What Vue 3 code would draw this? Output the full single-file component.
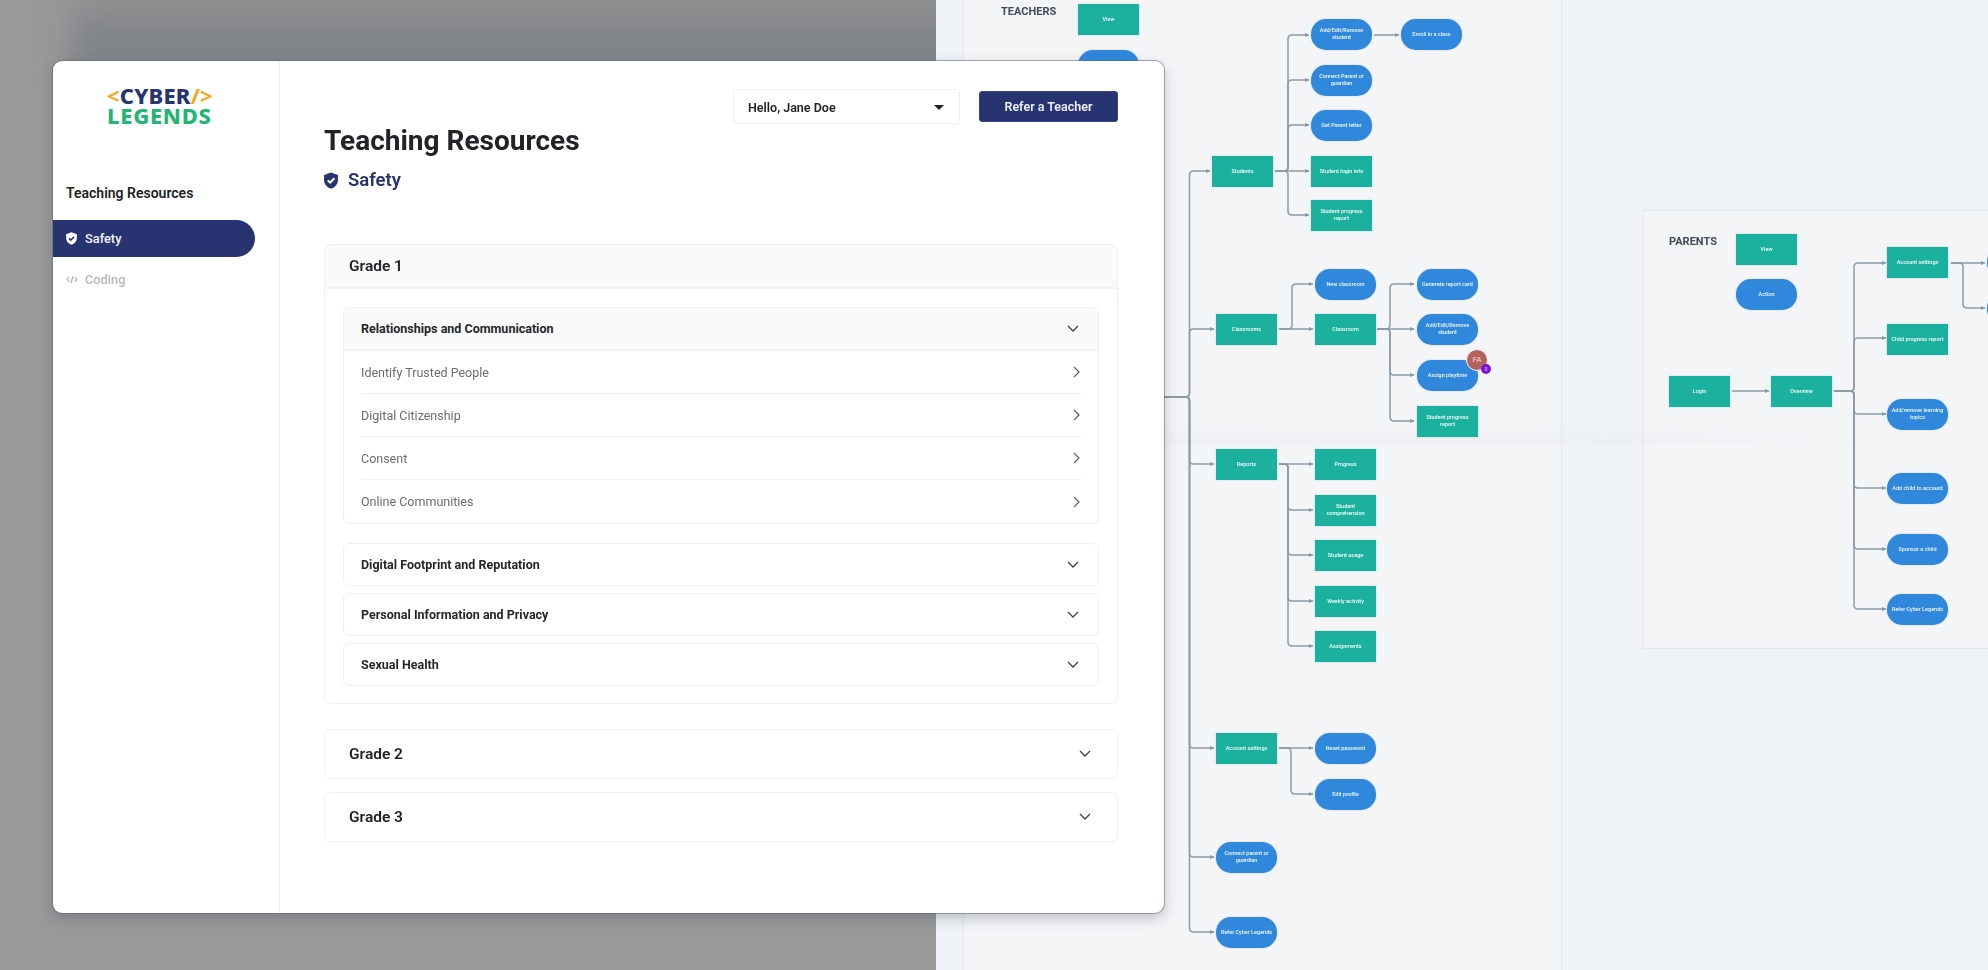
<template>
  <div class="page">
    <!-- flowchart behind the app window -->
    <div class="board">
      <div class="frame frame-teachers"></div>
      <div class="frame frame-parents"></div>
      <div class="fold"></div>
      <span class="board-label label-teachers">TEACHERS</span>
      <span class="board-label label-parents">PARENTS</span>

      <svg class="links" width="1988" height="970" viewBox="0 0 1988 970">
        <defs>
          <marker id="arrow" markerUnits="userSpaceOnUse" markerWidth="5" markerHeight="5" refX="4" refY="2.5" orient="auto">
            <path d="M0 .6 4.2 2.5 0 4.4z" fill="#8796a5" />
          </marker>
        </defs>
        <path v-for="(d, i) in links" :key="i" :d="d" class="link" marker-end="url(#arrow)" />
      </svg>

      <div
        v-for="n in nodes"
        :key="n.x + '-' + n.y"
        class="node"
        :class="n.pill ? 'node-pill' : 'node-rect'"
        :style="{ left: n.x + 'px', top: n.y + 'px' }"
      >{{ n.t }}</div>

      <div class="avatar">FA<span class="avatar-badge">0</span></div>
    </div>

    <div class="backdrop"><div class="backdrop-dark"></div></div>

    <div class="window">
      <aside class="sidebar">
        <div class="logo">
          <div class="logo-top"><span class="orange">&lt;</span>CYBER<span class="orange">/&gt;</span></div>
          <div class="logo-bottom">LEGENDS</div>
        </div>
        <div class="side-title">Teaching Resources</div>
        <div class="side-item active">
          <svg class="side-icon" viewBox="3 1 18 22">
            <path d="M12 1.5 3 4.8v6.4c0 5.5 3.8 9.7 9 11.3 5.2-1.6 9-5.8 9-11.3V4.8L12 1.5z" fill="#fff" />
            <path d="M7.8 11.8l3 3 5.6-5.8" fill="none" stroke="#283371" stroke-width="2.6" />
          </svg>
          Safety
        </div>
        <div class="side-item muted">
          <svg class="side-icon code" viewBox="0 0 24 16">
            <path d="M7 3 2 8l5 5M17 3l5 5-5 5M14 1l-4 14" fill="none" stroke="#a9a9a9" stroke-width="2.1" />
          </svg>
          Coding
        </div>
      </aside>

      <main class="main">
        <div class="topbar">
          <div class="user-select">
            <span>Hello, Jane Doe</span>
            <i class="caret"></i>
          </div>
          <button class="refer-btn">Refer a Teacher</button>
        </div>

        <h1>Teaching Resources</h1>
        <div class="subject">
          <svg class="subject-icon" viewBox="3 1 18 22">
            <path d="M12 1.5 3 4.8v6.4c0 5.5 3.8 9.7 9 11.3 5.2-1.6 9-5.8 9-11.3V4.8L12 1.5z" fill="#283371" />
            <path d="M7.8 11.8l3 3 5.6-5.8" fill="none" stroke="#fff" stroke-width="2.6" />
          </svg>
          Safety
        </div>

        <section class="grade grade-open">
          <div class="grade-head">Grade 1</div>
          <div class="grade-body">
            <div class="topic topic-open">
              <div class="topic-head">
                <span>Relationships and Communication</span>
                <svg class="chev-down" viewBox="0 0 12 7"><path d="M1 1l5 5 5-5" /></svg>
              </div>
              <div v-for="r in lessons" :key="r" class="lesson">
                <span>{{ r }}</span>
                <svg class="chev-right" viewBox="0 0 7 12"><path d="M1 .8l5 5.2-5 5.2" /></svg>
              </div>
            </div>
            <div v-for="t in topics" :key="t" class="topic topic-closed">
              <span>{{ t }}</span>
              <svg class="chev-down" viewBox="0 0 12 7"><path d="M1 1l5 5 5-5" /></svg>
            </div>
          </div>
        </section>

        <section v-for="g in grades" :key="g" class="grade grade-closed">
          <span>{{ g }}</span>
          <svg class="chev-down" viewBox="0 0 12 7"><path d="M1 1l5 5 5-5" /></svg>
        </section>
      </main>
    </div>
  </div>
</template>

<script setup>
const lessons = ['Identify Trusted People', 'Digital Citizenship', 'Consent', 'Online Communities']
const topics = ['Digital Footprint and Reputation', 'Personal Information and Privacy', 'Sexual Health']
const grades = ['Grade 2', 'Grade 3']

const nodes = [
  { x: 1078, y: 4, t: 'View' },
  { x: 1078, y: 50, t: 'Action', pill: true },
  { x: 1311, y: 19, t: 'Add/Edit/Remove student', pill: true },
  { x: 1401, y: 19, t: 'Enroll in a class', pill: true },
  { x: 1311, y: 65, t: 'Connect Parent or guardian', pill: true },
  { x: 1311, y: 110, t: 'Get Parent letter', pill: true },
  { x: 1311, y: 156, t: 'Student login info' },
  { x: 1311, y: 200, t: 'Student progress report' },
  { x: 1212, y: 156, t: 'Students' },
  { x: 1216, y: 314, t: 'Classrooms' },
  { x: 1315, y: 269, t: 'New classroom', pill: true },
  { x: 1315, y: 314, t: 'Classroom' },
  { x: 1417, y: 269, t: 'Generate report card', pill: true },
  { x: 1417, y: 314, t: 'Add/Edit/Remove student', pill: true },
  { x: 1417, y: 360, t: 'Assign playtime', pill: true },
  { x: 1417, y: 406, t: 'Student progress report' },
  { x: 1216, y: 449, t: 'Reports' },
  { x: 1315, y: 449, t: 'Progress' },
  { x: 1315, y: 495, t: 'Student comprehension' },
  { x: 1315, y: 540, t: 'Student usage' },
  { x: 1315, y: 586, t: 'Weekly activity' },
  { x: 1315, y: 631, t: 'Assignments' },
  { x: 1216, y: 733, t: 'Account settings' },
  { x: 1315, y: 733, t: 'Reset password', pill: true },
  { x: 1315, y: 779, t: 'Edit profile', pill: true },
  { x: 1216, y: 842, t: 'Connect parent or guardian', pill: true },
  { x: 1216, y: 917, t: 'Refer Cyber Legends', pill: true },
  { x: 1736, y: 234, t: 'View' },
  { x: 1736, y: 279, t: 'Action', pill: true },
  { x: 1669, y: 376, t: 'Login' },
  { x: 1771, y: 376, t: 'Overview' },
  { x: 1887, y: 247, t: 'Account settings' },
  { x: 1887, y: 324, t: 'Child progress report' },
  { x: 1887, y: 399, t: 'Add/remove learning topics', pill: true },
  { x: 1887, y: 473, t: 'Add child to account', pill: true },
  { x: 1887, y: 534, t: 'Sponsor a child', pill: true },
  { x: 1887, y: 594, t: 'Refer Cyber Legends', pill: true },
  { x: 1987, y: 247, t: '', pill: true },
  { x: 1987, y: 293, t: '', pill: true },
]

// one connector: out of a node, along the junction line, into the next node
function elbow(x0, y0, jx, x1, y1) {
  if (y0 === y1) return `M${x0} ${y0}H${x1}`
  const r = 4
  const s = y1 > y0 ? 1 : -1
  return `M${x0} ${y0}H${jx - r}Q${jx} ${y0} ${jx} ${y0 + s * r}V${y1 - s * r}Q${jx} ${y1} ${jx + r} ${y1}H${x1}`
}

function fan(x0, y0, jx, x1, ys) {
  return ys.map((y) => elbow(x0, y0, jx, x1, y))
}

const links = [
  ...fan(1150, 397, 1189.5, 1210, [171]),
  ...fan(1150, 397, 1189.5, 1214, [329, 464, 748, 857, 932]),
  ...fan(1275, 171, 1288, 1309, [35, 80, 125, 171, 215]),
  elbow(1374, 35, 0, 1399, 35),
  ...fan(1279, 329, 1292, 1313, [284, 329]),
  ...fan(1377, 329, 1390, 1414, [284, 329, 375, 421]),
  ...fan(1279, 464, 1288, 1313, [464, 510, 555, 601, 646]),
  ...fan(1279, 748, 1291, 1313, [748, 794]),
  elbow(1732, 391, 0, 1769, 391),
  ...fan(1834, 391, 1854, 1886, [263, 338, 414, 488, 549, 609]),
  ...fan(1951, 263, 1963, 1985, [263, 308]),
]
</script>

<style scoped>
* {
  box-sizing: border-box;
}
.page {
  position: relative;
  width: 1988px;
  height: 970px;
  overflow: hidden;
  background: #eff3f7;
  font-family: Roboto, "Liberation Sans", sans-serif;
  color: #212326;
}

/* flowchart */
.board {
  position: absolute;
  inset: 0;
  filter: blur(0.5px);
}
.frame {
  position: absolute;
  background: #f3f5f7;
  border: 1px solid #e2e8ee;
}
.frame-teachers {
  left: 963px;
  top: -2px;
  width: 599px;
  height: 974px;
}
.frame-parents {
  left: 1643px;
  top: 210px;
  width: 360px;
  height: 439px;
}
.board-label {
  position: absolute;
  font-weight: 700;
  font-size: 11px;
  line-height: 14px;
  color: #414b57;
}
.label-teachers {
  left: 1001px;
  top: 5px;
}
.label-parents {
  left: 1669px;
  top: 235px;
}
.links {
  position: absolute;
  left: 0;
  top: 0;
}
.link {
  fill: none;
  stroke: #8c9aa8;
  stroke-width: 1.5;
}
.node {
  position: absolute;
  width: 61px;
  height: 30.5px;
  display: flex;
  align-items: center;
  justify-content: center;
  text-align: center;
  padding: 0 4px;
  font-size: 5.5px;
  line-height: 7.5px;
  font-weight: 500;
  color: #f4fcfb;
  box-shadow: 0 0 2px rgba(120, 150, 170, 0.35);
}
.node-rect {
  background: #1cb09f;
}
.node-pill {
  background: #2f88dc;
  border-radius: 15px;
  color: #f2f8fe;
}
.avatar {
  position: absolute;
  left: 1466px;
  top: 349px;
  width: 22px;
  height: 22px;
  border-radius: 50%;
  background: #b5625f;
  border: 1px solid #f3f5f8;
  color: #f3dcdb;
  font-size: 8px;
  line-height: 20px;
  text-align: center;
}
.avatar-badge {
  position: absolute;
  left: 14px;
  top: 14px;
  width: 10px;
  height: 10px;
  border-radius: 50%;
  background: #7a10e0;
  color: #e9d8fb;
  font-size: 5px;
  line-height: 10px;
}
.fold {
  position: absolute;
  left: 936px;
  top: 425px;
  width: 920px;
  height: 20px;
  background: linear-gradient(180deg, rgba(232, 235, 238, 0), rgba(232, 235, 238, 0.4));
  -webkit-mask-image: linear-gradient(90deg, #000 70%, transparent);
  mask-image: linear-gradient(90deg, #000 70%, transparent);
}

/* blurred grey page on the left */
.backdrop {
  position: absolute;
  left: 0;
  top: 0;
  width: 936px;
  height: 970px;
  overflow: hidden;
  background: #99999a;
}
.backdrop-dark {
  position: absolute;
  left: 70px;
  top: -30px;
  width: 920px;
  height: 105px;
  background: linear-gradient(180deg, #929394 20%, #7e8286 75%);
  filter: blur(14px);
}

/* app window */
.window {
  position: absolute;
  left: 53px;
  top: 61px;
  width: 1111px;
  height: 852px;
  display: flex;
  background: #fff;
  border-radius: 9px;
  overflow: hidden;
  box-shadow: 0 0 0 1px rgba(95, 105, 115, 0.55), 0 5px 14px rgba(45, 55, 65, 0.28);
}
.sidebar {
  width: 227px;
  flex: none;
  border-right: 1px solid #eff1f4;
  display: flex;
  flex-direction: column;
}
.logo {
  margin: 24px 0 0 54px;
  height: 41px;
  font-family: "Noto Sans", "Liberation Sans", sans-serif;
  font-weight: 800;
  white-space: nowrap;
}
.logo-top {
  font-size: 22px;
  line-height: 20px;
  letter-spacing: 0.2px;
  color: #283371;
}
.logo-bottom {
  font-size: 22px;
  line-height: 20px;
  letter-spacing: 0.7px;
  color: #23b574;
}
.orange {
  color: #f6a81c;
  font-weight: 700;
}
.side-title {
  margin: 56px 0 0 13px;
  font-size: 14px;
  line-height: 22px;
  font-weight: 600;
}
.side-item {
  display: flex;
  align-items: center;
  gap: 8px;
  padding-left: 13px;
  font-size: 12.8px;
  font-weight: 500;
}
.side-item.active {
  margin-top: 16px;
  width: 202px;
  height: 37px;
  border-radius: 0 19px 19px 0;
  background: #283371;
  color: #f1f2f8;
}
.side-item.muted {
  margin-top: 5px;
  height: 34px;
  gap: 7px;
  color: #b7b7b7;
}
.side-icon {
  width: 11px;
  height: 13px;
}
.side-icon.code {
  width: 12px;
  height: 9px;
}

.main {
  flex: 1;
  padding: 28px 46px 0 44px;
}
.topbar {
  display: flex;
  justify-content: flex-end;
  align-items: center;
  gap: 19px;
  height: 35px;
}
.user-select {
  width: 227px;
  height: 35px;
  display: flex;
  align-items: center;
  justify-content: space-between;
  padding: 1px 15px 0 14px;
  border: 1px solid #eef0f3;
  border-radius: 3px;
  font-size: 12.5px;
  font-weight: 600;
}
.caret {
  width: 0;
  height: 0;
  border-left: 5px solid transparent;
  border-right: 5px solid transparent;
  border-top: 5px solid #222;
}
.refer-btn {
  width: 139px;
  height: 31px;
  border: 1px solid #3a4480;
  border-radius: 3px;
  background: #283371;
  color: #eef0f7;
  font-family: inherit;
  font-size: 12.5px;
  font-weight: 600;
}
h1 {
  margin: 0;
  font-size: 28px;
  line-height: 34px;
  font-weight: 700;
  color: #212326;
}
.subject {
  margin-top: 10px;
  height: 24px;
  display: flex;
  align-items: center;
  gap: 10px;
  font-size: 18.5px;
  font-weight: 600;
  color: #283371;
}
.subject-icon {
  width: 14px;
  height: 17px;
}
.grade {
  border: 1px solid #eceff3;
  border-radius: 7px;
}
.grade-open {
  margin-top: 52px;
}
.grade-head {
  height: 44px;
  display: flex;
  align-items: center;
  padding-left: 24px;
  background: #fafafb;
  border-bottom: 2px solid #f0f2f5;
  border-radius: 7px 7px 0 0;
  font-size: 15.5px;
  font-weight: 600;
}
.grade-body {
  padding: 18px 18px 17px;
  display: flex;
  flex-direction: column;
  gap: 7px;
}
.topic {
  border: 1px solid #eceff3;
  border-radius: 6px;
  font-size: 12.5px;
}
.topic-open {
  margin-bottom: 12px;
  overflow: hidden;
}
.topic-head {
  height: 43px;
  display: flex;
  align-items: center;
  justify-content: space-between;
  padding: 0 19px 0 17px;
  background: #fafafb;
  border-bottom: 2px solid #f0f2f5;
  font-weight: 700;
  color: #25272a;
}
.lesson {
  height: 43px;
  margin: 0 17px;
  display: flex;
  align-items: center;
  justify-content: space-between;
  border-bottom: 1px solid #eceef1;
  font-size: 12.5px;
  color: #6a6c70;
}
.lesson:last-child {
  border-bottom: 0;
}
.topic-closed {
  height: 43px;
  display: flex;
  align-items: center;
  justify-content: space-between;
  padding: 0 19px 0 17px;
  font-weight: 700;
  color: #25272a;
}
.grade-closed {
  height: 49.5px;
  display: flex;
  align-items: center;
  justify-content: space-between;
  padding: 0 26px 0 24px;
  font-size: 15.5px;
  font-weight: 600;
}
.grade-open + .grade-closed {
  margin-top: 25px;
}
.grade-closed + .grade-closed {
  margin-top: 13.5px;
}
.chev-down {
  width: 12px;
  height: 7px;
  fill: none;
  stroke: #3e4145;
  stroke-width: 1.3;
}
.chev-right {
  width: 7px;
  height: 12px;
  margin-right: 1px;
  fill: none;
  stroke: #55585c;
  stroke-width: 1.2;
}
</style>
